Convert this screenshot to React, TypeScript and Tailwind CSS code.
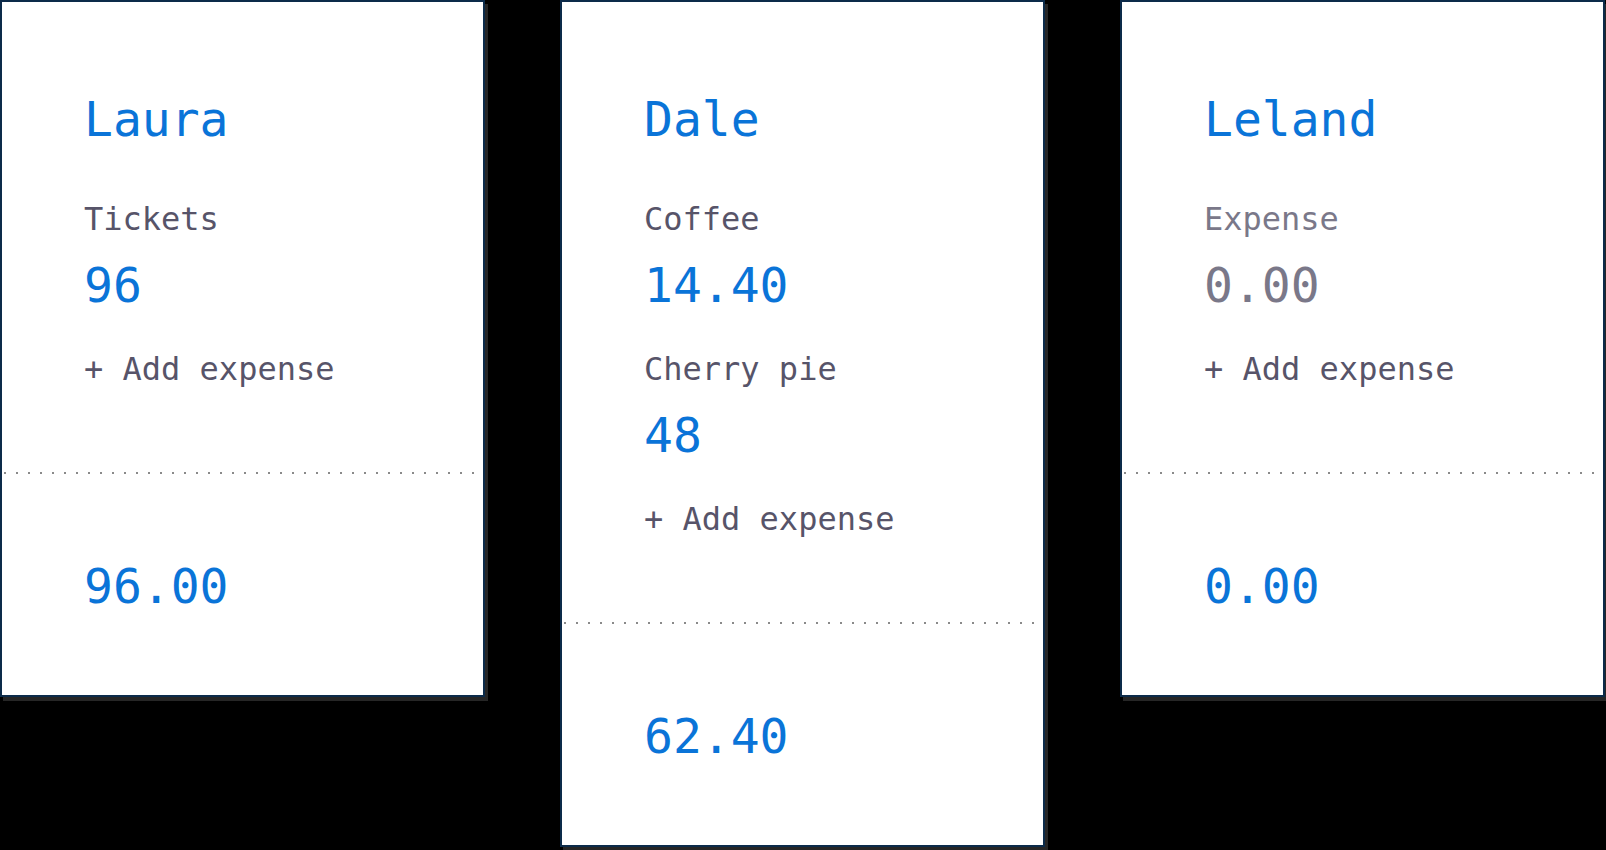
import React from "react";

type Item = { label: string; amount: string; placeholder?: boolean };
type Person = { name: string; items: Item[]; total: string };

const people: Person[] = [
  { name: "Laura", items: [{ label: "Tickets", amount: "96" }], total: "96.00" },
  {
    name: "Dale",
    items: [
      { label: "Coffee", amount: "14.40" },
      { label: "Cherry pie", amount: "48" },
    ],
    total: "62.40",
  },
  { name: "Leland", items: [{ label: "Expense", amount: "0.00", placeholder: true }], total: "0.00" },
];

function Card({ p }: { p: Person }) {
  return (
    <div className="w-[485px] shrink-0 bg-white border-2 border-[#0c2b4a] shadow-[3px_4px_0_#262626] flex flex-col">
      <div className="pl-[82px] pr-6 pt-[93px] pb-[87px] flex flex-col">
        <div className="text-[48px] leading-[48px] text-[#0a74d8]">{p.name}</div>
        <div className="flex flex-col mt-[60px]">
          {p.items.map((it) => (
            <div key={it.label} className="flex flex-col h-[150px]">
              <div
                className={
                  "text-[32px] leading-[32px] " +
                  (it.placeholder ? "text-[#7a7889]" : "text-[#575469]")
                }
              >
                {it.label}
              </div>
              <div
                className={
                  "text-[48px] leading-[48px] mt-[26px] " +
                  (it.placeholder ? "text-[#7a7889]" : "text-[#0a74d8]")
                }
              >
                {it.amount}
              </div>
            </div>
          ))}
          <div className="text-[32px] leading-[32px] text-[#575469]">+ Add expense</div>
        </div>
      </div>
      <div className="h-[2px] mx-[2px] bg-[linear-gradient(90deg,#8a8a8a_2px,transparent_2px)] bg-[length:12px_2px] bg-[position:12px_0]" />
      <div className="pl-[82px] pt-[88px] pb-[85px]">
        <div className="text-[48px] leading-[48px] text-[#0a74d8]">{p.total}</div>
      </div>
    </div>
  );
}

export default function App() {
  return (
    <div className="w-[1606px] h-[850px] overflow-hidden bg-black font-['DejaVu_Sans_Mono','Liberation_Mono',monospace]">
      <div className="flex items-start gap-[75px]">
        {people.map((p) => (
          <Card key={p.name} p={p} />
        ))}
      </div>
    </div>
  );
}
